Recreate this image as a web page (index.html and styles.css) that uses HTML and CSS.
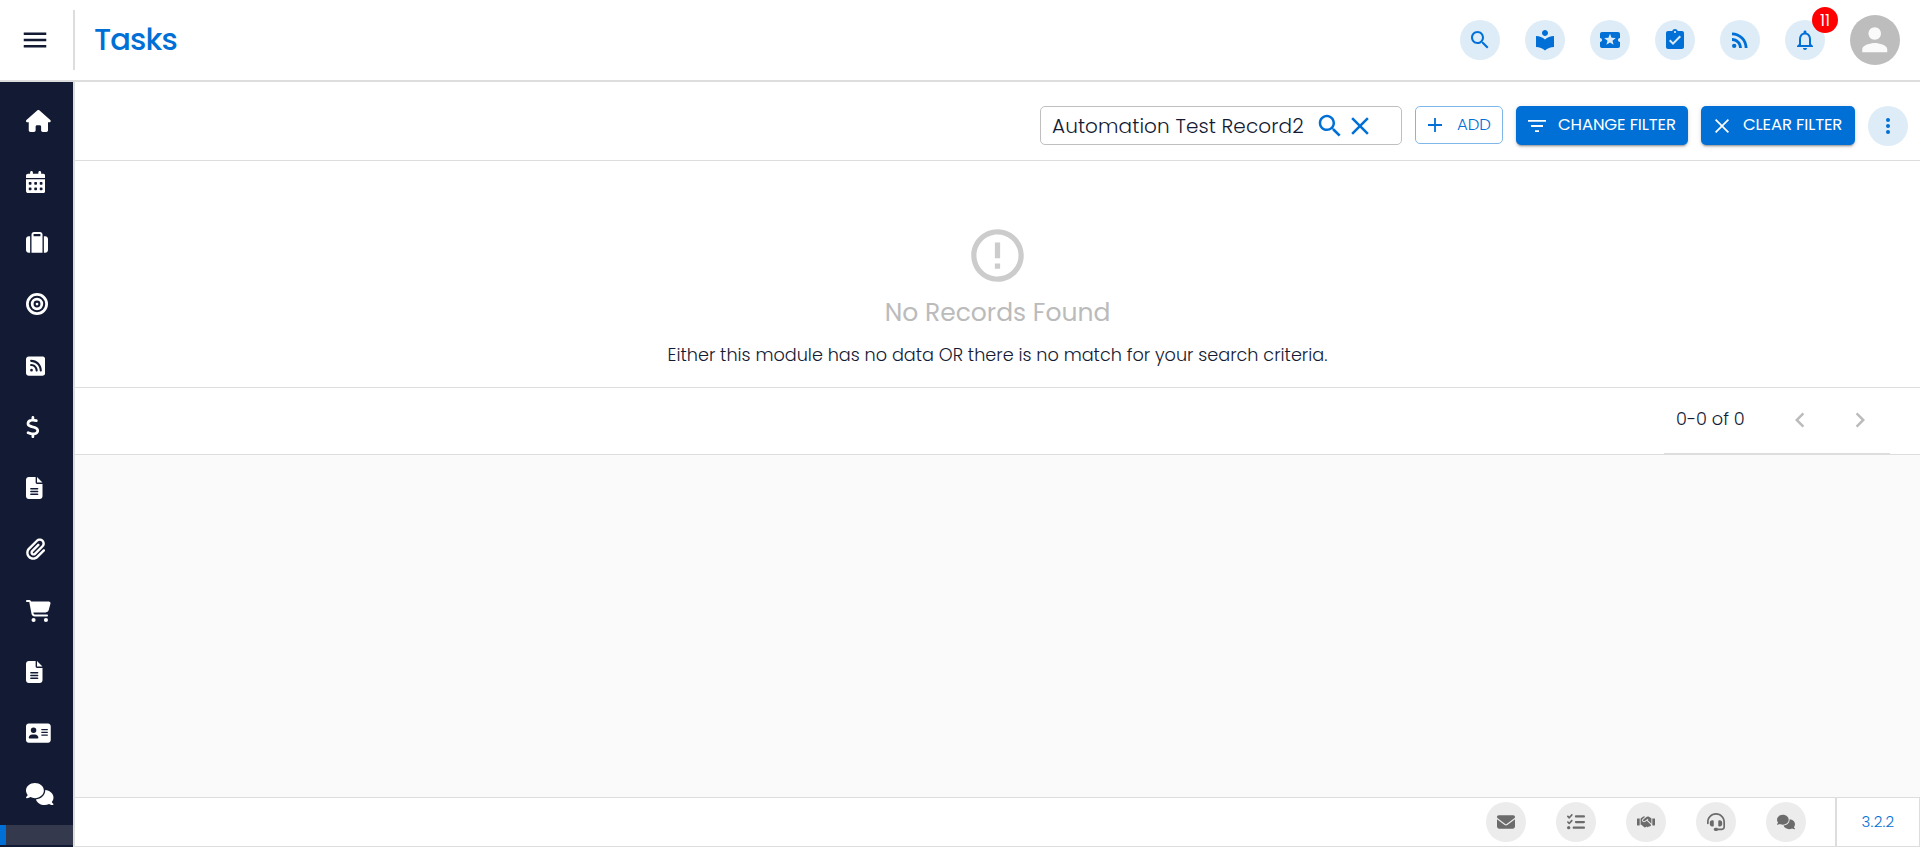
FILE: index.html
```html
<!DOCTYPE html>
<html lang="en">
<head>
<meta charset="utf-8">
<title>Tasks</title>
<link rel="stylesheet" href="styles.css">
</head>
<body>
<div class="app">
  <header class="topbar">
    <button class="menu-btn" aria-label="Menu"><svg viewBox="0 0 24 24" width="30" height="30"><path d="M3 18h18v-2H3v2zm0-5h18v-2H3v2zm0-7v2h18V6H3z"/></svg></button>
    <h1 class="title">Tasks</h1>
    <div class="top-actions">
      <button class="round"><svg viewBox="0 0 24 24"><path d="M15.5 14h-.79l-.28-.27C15.41 12.59 16 11.11 16 9.5 16 5.91 13.09 3 9.5 3S3 5.91 3 9.5 5.91 16 9.5 16c1.61 0 3.09-.59 4.23-1.57l.27.28v.79l5 4.99L20.49 19l-4.99-5zm-6 0C7.01 14 5 11.99 5 9.5S7.01 5 9.5 5 14 7.01 14 9.5 11.99 14 9.5 14z"/></svg></button>
      <button class="round"><svg viewBox="0 0 24 24"><path d="M12 11.55C9.64 9.35 6.48 8 3 8v11c3.48 0 6.64 1.35 9 3.55 2.36-2.19 5.52-3.55 9-3.55V8c-3.48 0-6.64 1.35-9 3.55zM12 8c1.66 0 3-1.34 3-3s-1.34-3-3-3-3 1.34-3 3 1.34 3 3 3z"/></svg></button>
      <button class="round"><svg viewBox="0 0 24 24"><path d="M20 12c0-1.1.9-2 2-2V6c0-1.1-.9-2-2-2H4c-1.1 0-1.99.9-1.99 2v4c1.1 0 1.99.9 1.99 2s-.89 2-2 2v4c0 1.1.9 2 2 2h16c1.1 0 2-.9 2-2v-4c-1.1 0-2-.9-2-2zm-4.42 4.8L12 14.5l-3.58 2.3 1.08-4.12-3.29-2.69 4.24-.25L12 5.8l1.54 3.95 4.24.25-3.29 2.69 1.09 4.11z"/></svg></button>
      <button class="round"><svg viewBox="0 0 24 24"><path d="M19 3h-4.18C14.4 1.84 13.3 1 12 1c-1.3 0-2.4.84-2.82 2H5c-1.1 0-2 .9-2 2v14c0 1.100.9 2 2 2h14c1.1 0 2-.9 2-2V5c0-1.100-.9-2-2-2zm-7 0c.55 0 1 .45 1 1s-.45 1-1 1-1-.45-1-1 .45-1 1-1zm-2 14l-4-4 1.410-1.410L10 14.170l6.590-6.590L18 9l-8 8z"/></svg></button>
      <button class="round"><svg viewBox="0 0 24 24"><circle cx="6.180" cy="17.820" r="2.180"/><path d="M4 4.440v2.830c7.030 0 12.730 5.700 12.730 12.730h2.830c0-8.590-6.970-15.560-15.560-15.560zm0 5.660v2.830c3.900 0 7.070 3.170 7.070 7.070h2.830c0-5.470-4.430-9.900-9.900-9.900z"/></svg></button>
      <button class="round"><svg viewBox="0 0 24 24"><path d="M12 22c1.100 0 2-.9 2-2h-4c0 1.100.9 2 2 2zm6-6v-5c0-3.070-1.630-5.640-4.500-6.320V4c0-.83-.67-1.500-1.500-1.500s-1.500.67-1.500 1.500v.68C7.640 5.360 6 7.920 6 11v5l-2 2v1h16v-1l-2-2zm-2 1H8v-6c0-2.480 1.510-4.500 4-4.500s4 2.020 4 4.500v6z"/></svg><span class="badge">11</span></button>
      <span class="avatar"><svg viewBox="0 0 24 24"><path d="M12 12c2.210 0 4-1.790 4-4s-1.790-4-4-4-4 1.790-4 4 1.790 4 4 4zm0 2c-2.670 0-8 1.340-8 4v2h16v-2c0-2.660-5.330-4-8-4z"/></svg></span>
    </div>
  </header>

  <div class="body">
    <nav class="sidebar">
      <a class="nav"><svg viewBox="0 0 576 512"><path d="M575.8 255.500c0 18-15 32.100-32 32.100h-32l.7 160.200c0 2.700-.2 5.400-.5 8.100V472c0 22.100-17.900 40-40 40H392c-22.100 0-40-17.900-40-40V384c0-17.700-14.300-32-32-32H256c-17.700 0-32 14.300-32 32v88c0 22.100-17.900 40-40 40H104c-22.100 0-40-17.900-40-40V287.600H32c-18 0-32-14-32-32.100c0-9 3-17 10-24L266.400 8c7-7 15-8 22-8s15 2 21 7L564.800 231.500c8 7 12 15 11 24z"/></svg></a>
      <a class="nav"><svg viewBox="0 0 448 512"><path fill-rule="evenodd" d="M128 0c17.700 0 32 14.300 32 32V64H288V32c0-17.700 14.300-32 32-32s32 14.300 32 32V64h48c26.500 0 48 21.500 48 48v48H0V112C0 85.500 21.500 64 48 64H96V32c0-17.700 14.300-32 32-32zM0 192H448V464c0 26.500-21.500 48-48 48H48c-26.500 0-48-21.500-48-48V192zM80 256a16 16 0 0 0-16 16v32a16 16 0 0 0 16 16h32a16 16 0 0 0 16-16v-32a16 16 0 0 0-16-16zM208 256a16 16 0 0 0-16 16v32a16 16 0 0 0 16 16h32a16 16 0 0 0 16-16v-32a16 16 0 0 0-16-16zM336 256a16 16 0 0 0-16 16v32a16 16 0 0 0 16 16h32a16 16 0 0 0 16-16v-32a16 16 0 0 0-16-16zM80 384a16 16 0 0 0-16 16v32a16 16 0 0 0 16 16h32a16 16 0 0 0 16-16v-32a16 16 0 0 0-16-16zM208 384a16 16 0 0 0-16 16v32a16 16 0 0 0 16 16h32a16 16 0 0 0 16-16v-32a16 16 0 0 0-16-16zM336 384a16 16 0 0 0-16 16v32a16 16 0 0 0 16 16h32a16 16 0 0 0 16-16v-32a16 16 0 0 0-16-16z"/></svg></a>
      <a class="nav"><svg viewBox="0 0 512 512"><path fill-rule="evenodd" d="M176 56V96H336V56c0-4.400-3.600-8-8-8H184c-4.400 0-8 3.600-8 8zM128 96V56c0-30.900 25.100-56 56-56H328c30.900 0 56 25.100 56 56V480H128V96zM64 96H96V480H64c-35.300 0-64-28.700-64-64V160c0-35.300 28.700-64 64-64zM448 480H416V96h32c35.300 0 64 28.700 64 64V416c0 35.300-28.700 64-64 64z"/></svg></a>
      <a class="nav"><svg viewBox="0 0 512 512" class="rings"><circle cx="256" cy="256" r="224"/><circle cx="256" cy="256" r="112"/><circle cx="256" cy="256" r="32" class="dot"/></svg></a>
      <a class="nav"><svg viewBox="0 0 448 512"><path fill-rule="evenodd" d="M64 32C28.700 32 0 60.700 0 96V416c0 35.300 28.700 64 64 64H384c35.300 0 64-28.700 64-64V96c0-35.300-28.700-64-64-64H64zM96 136c0-13.300 10.700-24 24-24c137 0 248 111 248 248c0 13.300-10.700 24-24 24s-24-10.700-24-24c0-110.500-89.500-200-200-200c-13.300 0-24-10.700-24-24zm0 96c0-13.300 10.700-24 24-24c83.900 0 152 68.100 152 152c0 13.300-10.700 24-24 24s-24-10.700-24-24c0-57.400-46.600-104-104-104c-13.300 0-24-10.700-24-24zm0 120a32 32 0 1 1 64 0 32 32 0 1 1 -64 0z"/></svg></a>
      <a class="nav"><svg viewBox="0 0 320 512"><path d="M160 0c17.700 0 32 14.300 32 32V67.700c1.600 .2 3.100 .4 4.700 .7c.4 .1 .7 .1 1.100 .2l48 8.800c17.400 3.200 28.900 19.900 25.700 37.200s-19.900 28.900-37.200 25.700l-47.500-8.700c-31.300-4.600-58.900-1.500-78.300 6.200s-27.200 18.300-29 28.100c-2 10.700-.5 16.700 1.200 20.400c1.800 3.900 5.500 8.300 12.800 13.200c16.300 10.700 41.300 17.700 73.700 26.300l2.900 .8c28.600 7.600 63.600 16.800 89.600 33.800c14.200 9.300 27.600 21.900 35.900 39.500c8.500 17.900 10.300 37.900 6.400 59.200c-6.900 38-33.100 63.400-65.600 76.700c-13.700 5.600-28.600 9.200-44.400 11V480c0 17.700-14.300 32-32 32s-32-14.300-32-32V445.100c-.4-.1-.9-.1-1.300-.2l-.2 0c-24.400-3.800-64.500-14.300-91.500-26.300c-16.100-7.200-23.400-26.100-16.200-42.200s26.100-23.400 42.200-16.200c20.900 9.300 55.300 18.500 75.200 21.600c31.900 4.700 58.200 2 76-5.300c16.900-6.900 24.600-16.900 26.800-28.900c1.900-10.600 .4-16.700-1.300-20.400c-1.900-4-5.600-8.400-13-13.300c-16.400-10.700-41.500-17.700-74-26.300l-2.800-.7C119.400 279.300 84.400 270 58.400 253c-14.200-9.300-27.500-22-35.800-39.600c-8.400-17.900-10.100-37.900-6.100-59.200C23.700 116 52.300 91.200 84.800 78.300c13.300-5.300 27.900-8.900 43.200-11V32c0-17.700 14.300-32 32-32z"/></svg></a>
      <a class="nav"><svg viewBox="0 0 384 512"><path id="file" fill-rule="evenodd" d="M64 0C28.700 0 0 28.700 0 64V448c0 35.300 28.700 64 64 64H320c35.300 0 64-28.700 64-64V160H256c-17.700 0-32-14.300-32-32V0H64zM256 0V128H384L256 0zM112 256H272c8.800 0 16 7.200 16 16s-7.200 16-16 16H112c-8.800 0-16-7.200-16-16s7.200-16 16-16zm0 64H272c8.800 0 16 7.200 16 16s-7.200 16-16 16H112c-8.800 0-16-7.200-16-16s7.200-16 16-16zm0 64H272c8.800 0 16 7.200 16 16s-7.200 16-16 16H112c-8.800 0-16-7.200-16-16s7.200-16 16-16z"/></svg></a>
      <a class="nav"><svg viewBox="0 0 448 512"><path d="M364.200 83.800c-24.400-24.400-64-24.400-88.400 0l-184 184c-42.100 42.100-42.100 110.300 0 152.400s110.300 42.100 152.400 0l152-152c10.900-10.900 28.700-10.900 39.600 0s10.900 28.700 0 39.600l-152 152c-64 64-167.600 64-231.600 0s-64-167.600 0-231.600l184-184c46.300-46.300 121.300-46.300 167.600 0s46.300 121.300 0 167.600l-176 176c-28.600 28.600-75 28.600-103.600 0s-28.600-75 0-103.600l144-144c10.900-10.900 28.700-10.900 39.600 0s10.900 28.700 0 39.600l-144 144c-6.700 6.700-6.700 17.700 0 24.400s17.700 6.700 24.400 0l176-176c24.400-24.400 24.400-64 0-88.400z"/></svg></a>
      <a class="nav"><svg viewBox="0 0 576 512"><path d="M0 24C0 10.700 10.700 0 24 0H69.500c22 0 41.500 12.800 50.600 32h411c26.300 0 45.500 25 38.600 50.400l-41 152.300c-8.500 31.400-37 53.300-69.500 53.300H170.700l5.400 28.500c2.200 11.300 12.100 19.500 23.600 19.500H488c13.300 0 24 10.700 24 24s-10.700 24-24 24H199.700c-34.600 0-64.300-24.600-70.700-58.500L77.400 54.500c-.7-3.800-4-6.500-7.900-6.500H24C10.700 48 0 37.300 0 24zM128 464a48 48 0 1 1 96 0 48 48 0 1 1 -96 0zm336-48a48 48 0 1 1 0 96 48 48 0 1 1 0-96z"/></svg></a>
      <a class="nav"><svg viewBox="0 0 384 512"><use href="#file"/></svg></a>
      <a class="nav"><svg viewBox="0 0 576 512"><path fill-rule="evenodd" d="M64 32C28.700 32 0 60.700 0 96V416c0 35.300 28.700 64 64 64H512c35.300 0 64-28.700 64-64V96c0-35.300-28.700-64-64-64H64zm80 256h64c44.200 0 80 35.800 80 80c0 8.800-7.200 16-16 16H80c-8.800 0-16-7.200-16-16c0-44.200 35.800-80 80-80zm-32-96a64 64 0 1 1 128 0 64 64 0 1 1 -128 0zm256-32H496c8.800 0 16 7.200 16 16s-7.200 16-16 16H368c-8.800 0-16-7.200-16-16s7.200-16 16-16zm0 64H496c8.800 0 16 7.200 16 16s-7.200 16-16 16H368c-8.800 0-16-7.200-16-16s7.200-16 16-16zm0 64H496c8.800 0 16 7.200 16 16s-7.200 16-16 16H368c-8.800 0-16-7.200-16-16s7.200-16 16-16z"/></svg></a>
      <a class="nav"><svg viewBox="0 0 640 512"><path id="comments" d="M208 352c114.900 0 208-78.800 208-176S322.900 0 208 0S0 78.800 0 176c0 38.600 14.700 74.300 39.600 103.400c-3.500 9.400-8.700 17.700-14.200 24.700c-4.800 6.200-9.700 11-13.300 14.300c-1.800 1.600-3.300 2.900-4.300 3.700c-.5 .4-.9 .7-1.100 .8l-.2 .2C1 327.200-1.400 334.400 .8 340.900S9.100 352 16 352c21.800 0 43.800-5.600 62.100-12.500c9.200-3.500 17.800-7.400 25.300-11.400C134.100 343.300 169.800 352 208 352zM448 176c0 112.300-99.100 196.900-216.500 207C255.800 457.400 336.400 512 432 512c38.200 0 73.900-8.700 104.700-23.900c7.500 4 16 7.900 25.200 11.400c18.300 6.900 40.300 12.500 62.100 12.500c6.900 0 13.100-4.500 15.200-11.100c2.100-6.600-.2-13.800-5.800-17.900l-.2-.2c-.2-.2-.6-.4-1.100-.8c-1-.8-2.500-2-4.300-3.700c-3.600-3.300-8.500-8.100-13.300-14.300c-5.500-7-10.700-15.400-14.200-24.700c24.900-29 39.600-64.700 39.600-103.400c0-92.800-84.900-168.900-192.600-175.500c.4 5.100 .6 10.300 .6 15.500z"/></svg></a>
      <a class="nav active"></a>
    </nav>

    <main class="main">
      <div class="toolbar">
        <div class="search">
          <span class="query">Automation Test Record2</span>
          <svg viewBox="0 0 24 24"><path d="M15.500 14h-.79l-.28-.27C15.410 12.590 16 11.110 16 9.500 16 5.910 13.090 3 9.500 3S3 5.910 3 9.500 5.910 16 9.500 16c1.610 0 3.090-.59 4.230-1.570l.27.28v.79l5 4.990L20.490 19l-4.990-5zm-6 0C7.010 14 5 11.990 5 9.500S7.010 5 9.500 5 14 7.010 14 9.500 11.990 14 9.500 14z"/></svg>
          <svg viewBox="0 0 24 24"><path d="M19 6.410 17.590 5 12 10.590 6.410 5 5 6.410 10.590 12 5 17.590 6.410 19 12 13.410 17.590 19 19 17.590 13.410 12z"/></svg>
        </div>
        <button class="btn outlined"><svg viewBox="0 0 24 24"><path d="M19 12.900h-6.100V19h-1.800v-6.100H5v-1.800h6.100V5h1.800v6.100H19z"/></svg><span class="t-add">ADD</span></button>
        <button class="btn filled change"><svg viewBox="0 0 24 24"><path d="M10 18h4v-1.800h-4V18zM3 6v1.800h18V6H3zm3 6.900h12v-1.800H6v1.800z"/></svg><span>CHANGE FILTER</span></button>
        <button class="btn filled clear"><svg viewBox="0 0 24 24"><path d="M19 6.200 17.800 5 12 10.800 6.200 5 5 6.200 10.800 12 5 17.800 6.200 19 12 13.200 17.800 19 19 17.800 13.200 12z"/></svg><span>CLEAR FILTER</span></button>
        <button class="round"><svg viewBox="0 0 24 24"><circle cx="12" cy="6" r="2"/><circle cx="12" cy="12" r="2"/><circle cx="12" cy="18" r="2"/></svg></button>
      </div>

      <section class="empty">
        <svg viewBox="0 0 24 24"><path d="M11 15h2v2h-2zm0-8h2v6h-2zm.99-5C6.470 2 2 6.480 2 12s4.470 10 9.990 10C17.520 22 22 17.520 22 12S17.520 2 11.990 2zM12 20c-4.420 0-8-3.580-8-8s3.580-8 8-8 8 3.580 8 8-3.580 8-8 8z"/></svg>
        <h2 class="empty-title">No Records Found</h2>
        <p class="empty-text">Either this module has no data OR there is no match for your search criteria.</p>
      </section>

      <div class="pager-row">
        <div class="pager">
          <span class="range">0-0 of 0</span>
          <button class="page-btn"><svg viewBox="0 0 24 24"><path d="M15.410 7.410 14 6l-6 6 6 6 1.410-1.410L10.830 12z"/></svg></button>
          <button class="page-btn"><svg viewBox="0 0 24 24"><path d="M10 6 8.590 7.410 13.170 12l-4.580 4.590L10 18l6-6z"/></svg></button>
        </div>
      </div>

      <div class="blank"></div>

      <footer class="footer">
        <div class="dock">
          <button class="tool"><svg viewBox="0 0 512 512"><path d="M48 64C21.500 64 0 85.500 0 112c0 15.100 7.100 29.300 19.200 38.400L236.800 313.600c11.400 8.500 27 8.500 38.400 0L492.800 150.400c12.100-9.100 19.200-23.300 19.200-38.400c0-26.500-21.500-48-48-48H48zM0 176V384c0 35.300 28.700 64 64 64H448c35.300 0 64-28.700 64-64V176L294.400 339.200c-22.800 17.100-54 17.100-76.800 0L0 176z"/></svg></button>
          <button class="tool"><svg viewBox="0 0 512 512"><path d="M152.100 38.200c9.900 8.900 10.700 24 1.800 33.900l-72 80c-4.400 4.900-10.600 7.800-17.200 7.900s-12.900-2.400-17.600-7L7 113C-2.300 103.600-2.300 88.400 7 79s24.600-9.400 33.900 0l22.100 22.100 55.100-61.200c8.900-9.900 24-10.700 33.900-1.800zm0 160c9.900 8.900 10.700 24 1.800 33.900l-72 80c-4.400 4.900-10.600 7.800-17.200 7.900s-12.900-2.400-17.600-7L7 273c-9.400-9.400-9.400-24.600 0-33.900s24.600-9.400 33.900 0l22.100 22.100 55.100-61.200c8.900-9.900 24-10.700 33.900-1.800zM224 96c0-17.700 14.300-32 32-32H480c17.700 0 32 14.300 32 32s-14.300 32-32 32H256c-17.700 0-32-14.300-32-32zm0 160c0-17.700 14.300-32 32-32H480c17.700 0 32 14.300 32 32s-14.300 32-32 32H256c-17.700 0-32-14.300-32-32zM160 416c0-17.700 14.300-32 32-32H480c17.700 0 32 14.300 32 32s-14.300 32-32 32H192c-17.700 0-32-14.300-32-32zM48 368a48 48 0 1 1 0 96 48 48 0 1 1 0-96z"/></svg></button>
          <button class="tool"><svg viewBox="0 0 640 512"><path d="M323.400 85.200l-96.800 78.400c-16.100 13-19.200 36.400-7 53.100c12.900 17.800 38 21.300 55.300 7.800l99.300-77.200c7-5.400 17-4.200 22.500 2.800s4.200 17-2.800 22.500l-20.900 16.200L512 316.800V128h-.7l-3.900-2.500L434.800 79c-15.300-9.800-33.200-15-51.400-15c-21.800 0-43 7.500-60 21.200zm22.800 124.400l-51.700 40.200C263 274.300 217.300 268 193.700 235.600c-22.200-30.500-16.600-73.100 12.700-96.800l83.200-67.300c-11.600-4.900-24.100-7.400-36.800-7.400C234 64 215.700 69.600 200 80l-72 48V352h28.200l91.400 83.400c19.600 17.900 49.900 16.500 67.800-3.100c5.500-6.100 9.200-13.200 11.100-20.600l17 15.600c19.500 17.900 49.900 16.600 67.800-2.900c4.500-4.900 7.800-10.600 9.900-16.500c19.400 13 45.800 10.300 62.100-7.500c17.900-19.500 16.600-49.900-2.900-67.800l-134.200-123zM16 128c-8.800 0-16 7.200-16 16V352c0 17.700 14.300 32 32 32H64c17.700 0 32-14.300 32-32V128H16zM544 128V352c0 17.700 14.300 32 32 32h32c17.700 0 32-14.300 32-32V144c0-8.800-7.200-16-16-16H544z"/></svg></button>
          <button class="tool"><svg viewBox="0 0 512 512"><path d="M256 48C141.100 48 48 141.100 48 256v40c0 13.300-10.700 24-24 24s-24-10.700-24-24V256C0 114.600 114.600 0 256 0S512 114.600 512 256V400.100c0 48.600-39.400 88-88.100 88L313.600 488c-8.300 14.300-23.800 24-41.600 24H240c-26.500 0-48-21.500-48-48s21.500-48 48-48h32c17.800 0 33.300 9.700 41.600 24l110.400 .1c22.100 0 40-17.900 40-40V256c0-114.900-93.100-208-208-208zM144 208h16c17.700 0 32 14.300 32 32V352c0 17.700-14.300 32-32 32H144c-35.300 0-64-28.700-64-64V272c0-35.300 28.700-64 64-64zm224 0c35.300 0 64 28.700 64 64v48c0 35.300-28.700 64-64 64H352c-17.700 0-32-14.300-32-32V240c0-17.700 14.300-32 32-32h16z"/></svg></button>
          <button class="tool"><svg viewBox="0 0 640 512"><use href="#comments"/></svg></button>
        </div>
        <span class="version">3.2.2</span>
      </footer>
    </main>
  </div>
</div>
</body>
</html>
```

FILE: styles.css
```css
* { box-sizing: border-box; }

body {
  margin: 0;
  font-family: Poppins, Inter, "Open Sans", sans-serif;
  font-size: 16px;
  color: #131a33;
  background: #fff;
}

button {
  font: inherit;
  border: 0;
  padding: 0;
  background: none;
  color: inherit;
}

h1, h2, p { margin: 0; }

svg { display: block; fill: currentColor; flex: none; }

.app {
  display: flex;
  flex-direction: column;
  height: 847px;
  overflow: hidden;
}

/* Top bar */
.topbar {
  flex: none;
  display: flex;
  align-items: center;
  height: 82px;
  padding-right: 20px;
  border-bottom: 2px solid #ddd;
}

.menu-btn {
  display: flex;
  align-items: center;
  width: 75px;
  height: 60px;
  padding-left: 20px;
  border-right: 2px solid #ddd;
}

.title {
  padding: 0 0 1px 19px;
  font-size: 30.5px;
  font-weight: 500;
  line-height: 40px;
  letter-spacing: -0.9px;
  color: #0070d6;
}

.top-actions {
  display: flex;
  align-items: center;
  gap: 25px;
  margin-left: auto;
}

.round {
  position: relative;
  display: flex;
  align-items: center;
  justify-content: center;
  width: 40px;
  height: 40px;
  border-radius: 50%;
  background: #deecf8;
  color: #0070d6;
}

.round svg { width: 24px; height: 24px; }

.badge {
  position: absolute;
  top: -13px;
  right: -13px;
  width: 26px;
  height: 26px;
  border-radius: 50%;
  background: #f00;
  color: #fff;
  font-size: 15.5px;
  line-height: 27px;
  text-align: center;
}

.avatar {
  display: flex;
  align-items: center;
  justify-content: center;
  width: 50px;
  height: 50px;
  border-radius: 50%;
  background: #bdbdbd;
  color: #fafafa;
}

.avatar svg { width: 37.5px; height: 37.5px; }

/* Sidebar */
.body { flex: 1; display: flex; min-height: 0; }

.sidebar {
  flex: none;
  display: flex;
  flex-direction: column;
  width: 75px;
  height: 765px;
  padding-top: 8px;
  overflow: hidden;
  background: #131a33;
  border-right: 2px solid #ddd;
}

.nav {
  flex: none;
  display: flex;
  align-items: center;
  height: 61.25px;
  padding-left: 26px;
  color: #fff;
}

.nav svg { height: 22px; }

.nav.active {
  height: 20px;
  background: #34394d;
  border-left: 6px solid #0070d6;
}

.rings circle { fill: none; stroke: currentColor; stroke-width: 64; }
.rings .dot { fill: currentColor; stroke: none; }

/* Main column */
.main { flex: 1; display: flex; flex-direction: column; min-width: 0; }

.toolbar {
  flex: none;
  display: flex;
  align-items: flex-start;
  justify-content: flex-end;
  height: 79px;
  padding: 24px 12px 0 0;
  border-bottom: 1px solid #ddd;
}

.search {
  display: flex;
  align-items: center;
  width: 362px;
  height: 39px;
  margin-right: 13px;
  padding-left: 11px;
  border: 1px solid #bfbfbf;
  border-radius: 5px;
}

.query {
  width: 263px;
  font-size: 20px;
  font-weight: 300;
  letter-spacing: 0.1px;
  white-space: nowrap;
}

.search svg { width: 30px; height: 30px; color: #0070d6; }

.btn {
  display: flex;
  align-items: center;
  height: 39px;
  border-radius: 5px;
  font-size: 16.5px;
  letter-spacing: -0.13px;
  white-space: nowrap;
}

.btn svg { width: 24px; height: 24px; }

.outlined {
  width: 88px;
  height: 38px;
  margin-right: 13px;
  padding-left: 7px;
  border: 1px solid #80b7ea;
  color: #0070d6;
  font-weight: 300;
}

.filled {
  margin-right: 13px;
  background: #0070d6;
  color: #fff;
  box-shadow: 0 3px 1px -2px rgba(0, 0, 0, .2), 0 2px 2px rgba(0, 0, 0, .14), 0 1px 5px rgba(0, 0, 0, .12);
}

.change { width: 172px; padding-left: 9px; }
.clear { width: 154px; padding-left: 9px; }

.btn span { padding: 0 0 2px 9px; }
.btn .t-add { padding-left: 10px; }

.empty {
  flex: none;
  display: flex;
  flex-direction: column;
  align-items: center;
  height: 227px;
  padding-top: 63px;
  border-bottom: 1px solid #ddd;
}

.empty svg { width: 63px; height: 63px; color: #ccc; }

.empty-title {
  padding-top: 8px;
  font-size: 25px;
  font-weight: 400;
  line-height: 36px;
  color: #bbb;
}

.empty-text {
  padding-top: 12px;
  font-size: 17.65px;
  font-weight: 300;
  line-height: 24px;
  color: #131a33;
}

.pager-row {
  flex: none;
  display: flex;
  justify-content: flex-end;
  height: 67px;
  padding-right: 30px;
  border-bottom: 1px solid #ddd;
}

.pager {
  display: flex;
  align-items: center;
  width: 226px;
  padding: 0 0 2px 12px;
  border-bottom: 1px solid #ddd;
}

.range { width: 109px; padding-bottom: 2px; font-size: 17.7px; font-weight: 300; }

.page-btn { width: 30px; margin-right: 30px; color: #bbb; }
.page-btn:last-child { margin-right: 0; }
.page-btn svg { width: 30px; height: 30px; }

.blank { flex: 1; background: #fafafa; }

.footer {
  flex: none;
  display: flex;
  justify-content: flex-end;
  height: 50px;
  border: 1px solid #ddd;
  border-left: 0;
}

.dock {
  display: flex;
  align-items: center;
  gap: 30px;
  padding-right: 29px;
}

.tool {
  display: flex;
  align-items: center;
  justify-content: center;
  width: 40px;
  height: 40px;
  border-radius: 50%;
  background: #ececec;
  color: #6b6b6b;
}

.tool svg { width: 18px; height: 18px; }

.version {
  width: 84px;
  border-left: 2px solid #ddd;
  font-size: 15px;
  font-weight: 300;
  line-height: 48px;
  letter-spacing: 0.3px;
  text-align: center;
  color: #0070d6;
}
```
